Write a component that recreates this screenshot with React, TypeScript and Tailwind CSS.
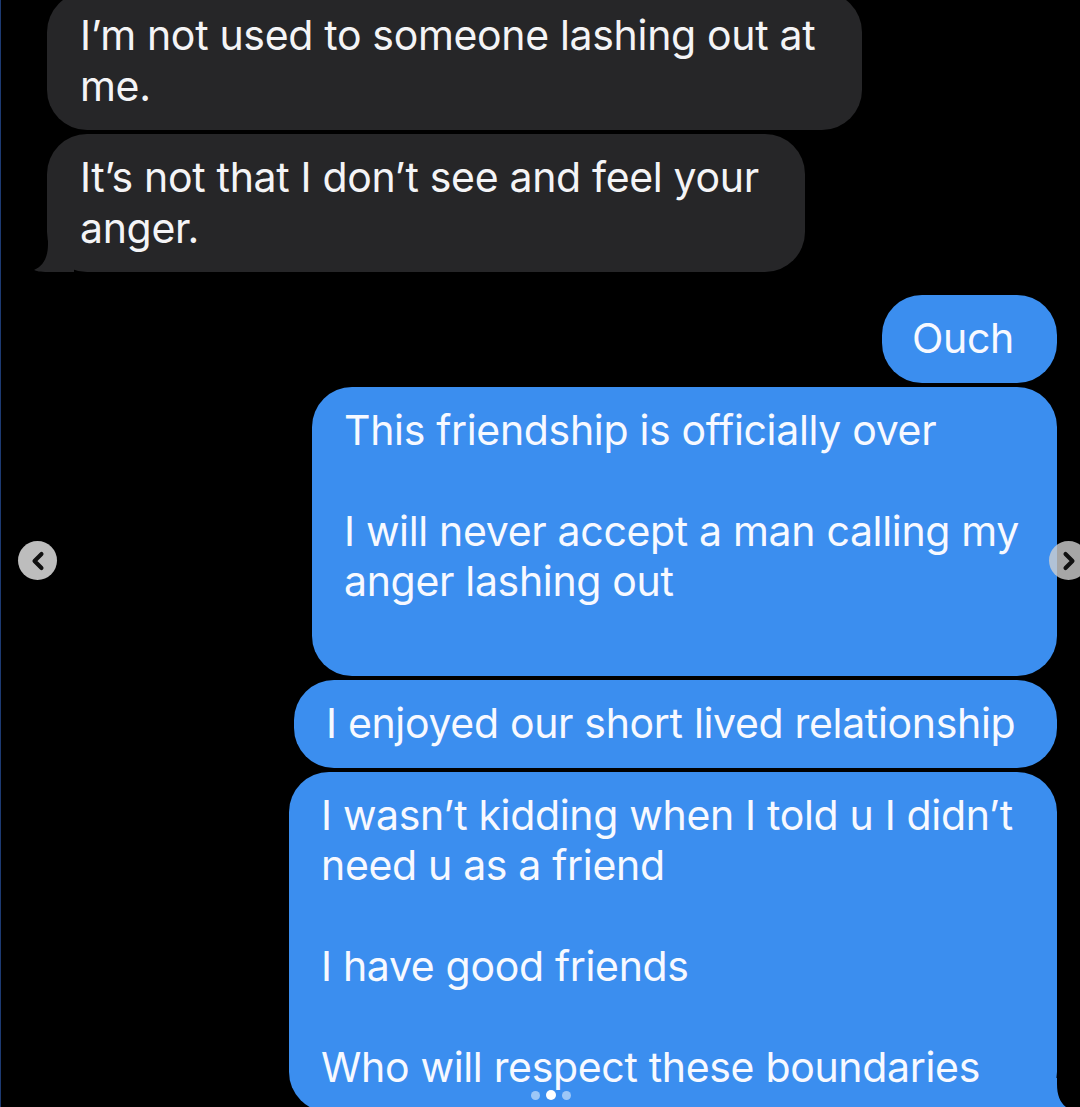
import { ChevronLeft, ChevronRight } from 'lucide-react';

const FONT = 'font-["Inter","Liberation_Sans",sans-serif]';

function GrayBubble({ lines, width, tail = false }: { lines: string[]; width: string; tail?: boolean }) {
  return (
    <div className={`relative ${width} rounded-[40px] bg-[#262628] pb-[19px] pl-[33px] pt-[18px] text-[#f4f4f6]`}>
      {lines.map((l, i) => (
        <div key={i} className="h-[50.5px] whitespace-nowrap leading-[50.5px]">
          {l}
        </div>
      ))}
      {tail && (
        <svg className="absolute bottom-0 left-[-13px]" width="40" height="34" viewBox="0 0 40 34">
          <path d="M40 0 L40 34 L14 34 C6 34 2 33 0 32 C9 28 14 20 14 6 L14 0 Z" fill="#262628" />
        </svg>
      )}
    </div>
  );
}

function BlueBubble({
  lines,
  width,
  pad = 'pl-[32px]',
  tail = false,
}: {
  lines: string[];
  width: string;
  pad?: string;
  tail?: boolean;
}) {
  return (
    <div className={`relative ${width} rounded-[40px] bg-[#3b8eef] pb-[19px] pt-[18px] ${pad} text-[#f7f9ff]`}>
      {lines.map((l, i) => (
        <div key={i} className="h-[50.5px] whitespace-nowrap leading-[50.5px]">
          {l}
        </div>
      ))}
      {tail && (
        <svg className="absolute bottom-0 right-[-14px]" width="44" height="34" viewBox="0 0 44 34">
          <path d="M0 0 L30 0 L30 6 C30 20 35 28 44 32 C42 33 38 34 30 34 L0 34 Z" fill="#3b8eef" />
        </svg>
      )}
    </div>
  );
}

export default function App() {
  return (
    <div
      className={`relative h-[1107px] w-[1080px] overflow-hidden border-l border-[#1d3a72] bg-black text-[41px] tracking-[-0.008em] ${FONT}`}
    >
      <div className="flex flex-col">
        <div className="-mt-[8px] flex flex-col items-start gap-[4px] pl-[46px]">
          <GrayBubble width="w-[815px]" lines={["I’m not used to someone lashing out at", 'me.']} />
          <GrayBubble width="w-[758px]" tail lines={["It’s not that I don’t see and feel your", 'anger.']} />
        </div>

        <div className="mt-[23px] flex flex-col items-end gap-[4px] pr-[23px]">
          <BlueBubble width="w-[175px]" pad="pl-[30px]" lines={['Ouch']} />
          <BlueBubble
            width="w-[745px]"
            lines={['This friendship is officially over', '', 'I will never accept a man calling my', 'anger lashing out', '']}
          />
          <BlueBubble width="w-[763px]" lines={['I enjoyed our short lived relationship']} />
          <BlueBubble
            width="w-[768px]"
            tail
            lines={[
              'I wasn’t kidding when I told u I didn’t',
              'need u as a friend',
              '',
              'I have good friends',
              '',
              'Who will respect these boundaries',
            ]}
          />
        </div>
      </div>

      <button
        type="button"
        className="absolute left-[17px] top-[541px] flex h-[39px] w-[39px] items-center justify-center rounded-full bg-[#bdbdbd] text-[#111]"
      >
        <ChevronLeft size={28} strokeWidth={3.5} />
      </button>
      <button
        type="button"
        className="absolute left-[1048px] top-[541px] flex h-[39px] w-[39px] items-center justify-center rounded-full bg-[#d0d0d0]/80 text-[#111]"
      >
        <ChevronRight size={28} strokeWidth={3.5} />
      </button>

      <div className="absolute left-[530px] top-[1090px] flex items-center gap-[6px]">
        <span className="h-[9px] w-[9px] rounded-full bg-white/50" />
        <span className="h-[10px] w-[10px] rounded-full bg-white" />
        <span className="h-[9px] w-[9px] rounded-full bg-white/50" />
      </div>
    </div>
  );
}
